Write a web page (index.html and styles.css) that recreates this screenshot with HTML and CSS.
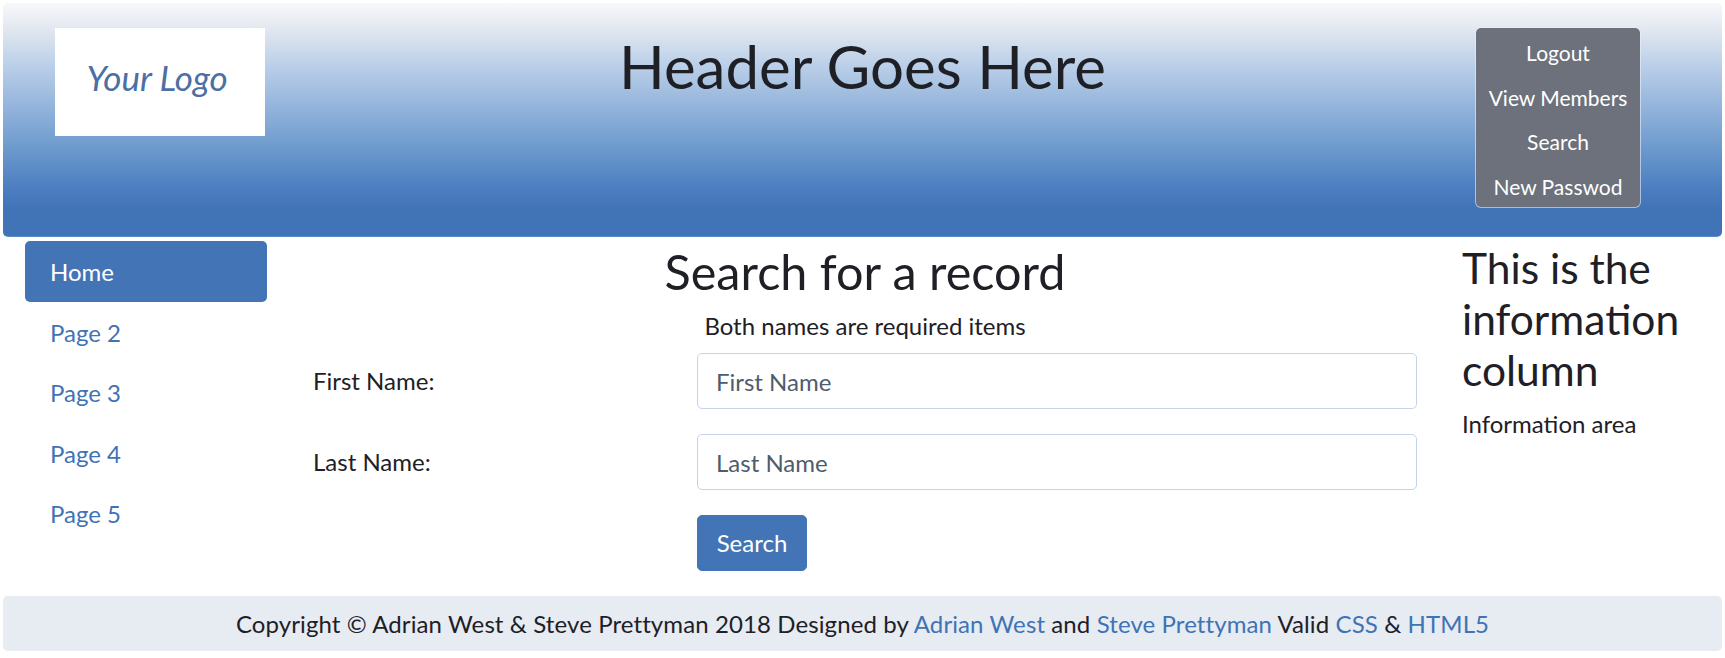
FILE: index.html
```html
<!DOCTYPE html>
<html lang="en">
<head>
<meta charset="utf-8">
<title>Search for a record</title>
<link rel="stylesheet" href="styles.css">
</head>
<body>
<header class="site-header">
  <div class="brand-col">
    <div class="logo">Your Logo</div>
  </div>
  <h1 class="site-title">Header Goes Here</h1>
  <div class="menu-col">
    <nav class="top-menu">
      <a href="#">Logout</a>
      <a href="#">View Members</a>
      <a href="#">Search</a>
      <a href="#">New Passwod</a>
    </nav>
  </div>
</header>

<div class="content">
  <nav class="side-nav">
    <a class="side-link active" href="#">Home</a>
    <a class="side-link" href="#">Page 2</a>
    <a class="side-link" href="#">Page 3</a>
    <a class="side-link" href="#">Page 4</a>
    <a class="side-link" href="#">Page 5</a>
  </nav>

  <main class="main">
    <h2 class="main-title">Search for a record</h2>
    <p class="note">Both names are required items</p>
    <form class="search-form">
      <div class="form-row">
        <label class="form-label" for="fname">First Name:</label>
        <input class="form-input" id="fname" type="text" placeholder="First Name">
      </div>
      <div class="form-row">
        <label class="form-label" for="lname">Last Name:</label>
        <input class="form-input" id="lname" type="text" placeholder="Last Name">
      </div>
      <div class="form-row form-actions">
        <span></span>
        <button class="btn" type="button">Search</button>
      </div>
    </form>
  </main>

  <aside class="info">
    <h3 class="info-title">This is the information column</h3>
    <p class="info-text">Information area</p>
  </aside>
</div>

<footer class="site-footer">
  <p>Copyright &copy; Adrian West &amp; Steve Prettyman 2018 Designed by <a href="#">Adrian West</a> and <a href="#">Steve Prettyman</a> Valid <a href="#">CSS</a> &amp; <a href="#">HTML5</a></p>
</footer>
</body>
</html>
```

FILE: styles.css
```css
* { box-sizing: border-box; }

html, body {
  margin: 0;
  padding: 0;
  background: #ffffff;
}

body {
  font-family: "Lato", "Open Sans", sans-serif;
  font-size: 24px;
  line-height: 1.5;
  color: #212529;
}

a { color: #3f73b5; text-decoration: none; }

/* ---------- header ---------- */
.site-header {
  margin: 3px 3px 0;
  height: 234px;
  border-radius: 5px;
  background: linear-gradient(to bottom,
    #f7f8fb 0px,
    #e6eaf1 22px,
    #bdd1e9 60px,
    #93b4dc 104px,
    #6a98cc 148px,
    #4a7cbf 188px,
    #4174b6 206px,
    #4174b6 100%);
  border-bottom: 1px solid #5a8bcb;
  display: grid;
  grid-template-columns: 285px 1fr 285px;
  padding-top: 25px;
}

.brand-col { padding-left: 52px; }

.logo {
  width: 210px;
  height: 108px;
  background: #ffffff;
  display: flex;
  align-items: center;
  justify-content: center;
  font-style: italic;
  font-size: 35px;
  color: #4c6fa4;
  padding: 0 6px 10px 0;
}

.site-title {
  margin: 2px 0 0;
  text-align: center;
  font-size: 60px;
  font-weight: 400;
  line-height: 1.2;
  color: #1e2026;
}

.menu-col { padding-left: 39px; }

.top-menu {
  width: 164px;
  height: 179px;
  padding-top: 3px;
  background: #6c717b;
  border-radius: 5px;
  box-shadow: 0 0 0 1px rgba(235, 240, 248, 0.6);
  display: flex;
  flex-direction: column;
}

.top-menu a {
  color: #ffffff;
  font-size: 21px;
  line-height: 44.5px;
  text-align: center;
  white-space: nowrap;
}

/* ---------- content ---------- */
.content {
  display: grid;
  grid-template-columns: 287.5px 1fr 287.5px;
}

.side-nav {
  display: flex;
  flex-direction: column;
  padding: 4px 20.5px 0 25px;
}

.side-link {
  display: block;
  height: 60.5px;
  padding: 12px 25px;
  line-height: 37px;
  color: #3f73b5;
  border-radius: 5px;
}

.side-link.active {
  background: #4375b6;
  color: #ffffff;
}

.main {
  padding: 5px 20.5px 0 25.5px;
}

.main-title {
  margin: 0 0 8px;
  text-align: center;
  font-size: 48.5px;
  font-weight: 400;
  line-height: 1.2;
  color: #1e2026;
}

.note {
  margin: 0 0 9px;
  text-align: center;
  color: #1e2026;
}

.search-form { margin: 0; }

.form-row {
  display: grid;
  grid-template-columns: 384px 1fr;
  align-items: center;
  margin-bottom: 25px;
}

.form-row.form-actions { margin-bottom: 0; }

.form-label { color: #1e2026; }

.form-input {
  display: block;
  width: 100%;
  height: 56px;
  padding: 9px 18px;
  font-family: inherit;
  font-size: 24px;
  line-height: 36px;
  color: #212529;
  background: #ffffff;
  border: 1px solid #c6d4e9;
  border-radius: 5px;
  outline: none;
}

.form-input::placeholder { color: #4f5c6e; opacity: 1; }

.btn {
  justify-self: start;
  width: 110px;
  height: 56px;
  padding: 9px 18px;
  font-family: inherit;
  font-size: 24px;
  line-height: 36px;
  color: #ffffff;
  background: #4375b6;
  border: 1px solid #4375b6;
  border-radius: 5px;
}

.info {
  padding: 5px 10px 0 24.5px;
}

.info-title {
  margin: 0 0 11px;
  font-size: 42.5px;
  font-weight: 400;
  line-height: 1.2;
  color: #1e2026;
}

.info-text {
  margin: 0;
  color: #1e2026;
}

/* ---------- footer ---------- */
.site-footer {
  margin: 25px 3px 0;
  height: 55px;
  background: #e7ebf2;
  border-radius: 5px;
  display: flex;
  align-items: center;
  justify-content: center;
}

.site-footer p {
  margin: 0;
  color: #1e2026;
  white-space: nowrap;
  letter-spacing: 0.1px;
}
```
